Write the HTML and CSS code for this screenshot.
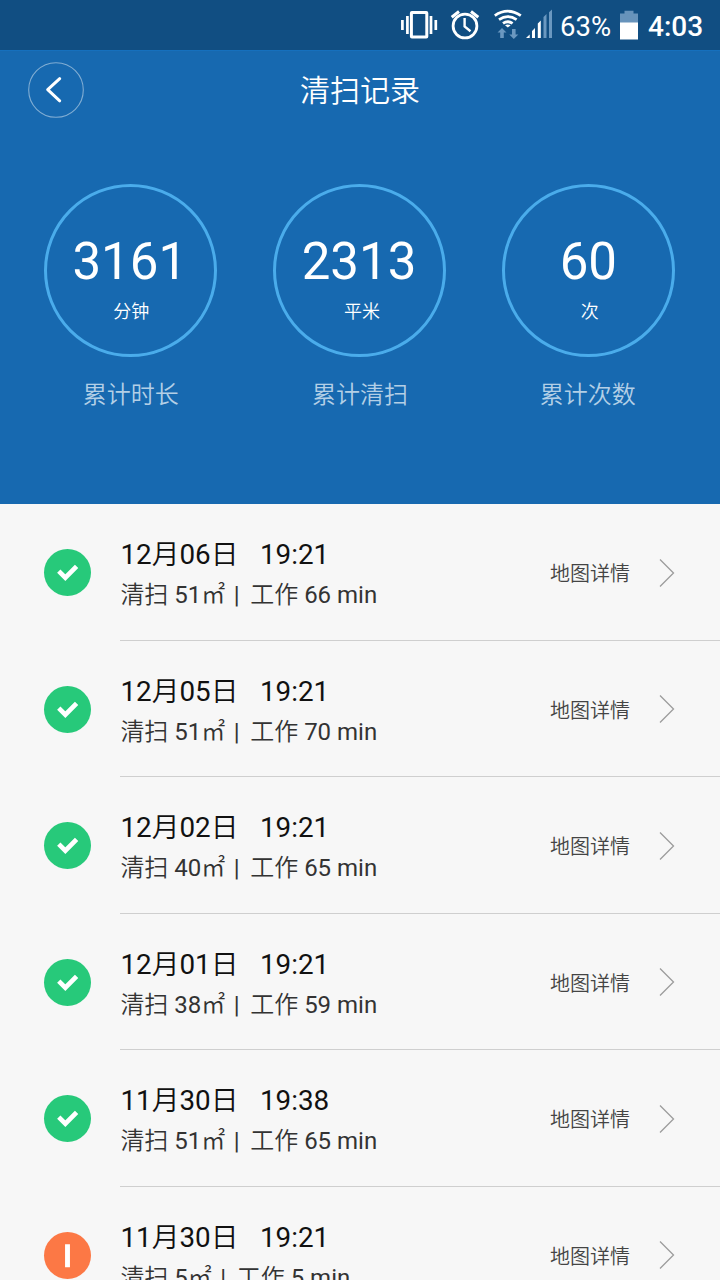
FILE: index.html
```html
<!DOCTYPE html>
<html lang="zh-CN">
<head>
<meta charset="utf-8">
<title>清扫记录</title>
<link rel="stylesheet" href="styles.css">
</head>
<body>
<svg class="defs" width="0" height="0">
  <symbol id="check" viewBox="0 0 48 48"><path d="M15.100 22.600 21.800 29.300 33.300 17.700" fill="none" stroke="#fff" stroke-width="4.800"/></symbol>
  <symbol id="bar" viewBox="0 0 48 48"><path d="M24 12.500V36" fill="none" stroke="#fff" stroke-width="5"/></symbol>
  <symbol id="chevron" viewBox="0 0 16 30"><path d="M1 1.5 14.5 15 1 28.5" fill="none" stroke="#9c9c9c" stroke-width="1.3"/></symbol>
</svg>
<div class="status">
  <svg class="status-icons" width="154" height="50" viewBox="400 0 154 50">
    <g fill="none" stroke="#fff" stroke-width="2.8">
      <rect x="411.400" y="12.600" width="15.400" height="24.500" rx="0.500" stroke-width="3"/>
      <path d="M407.400 16V34M431 16V34M402.400 20V30M435.800 20V30" stroke-width="2.700"/>
      <circle cx="465" cy="26" r="11.900" stroke-width="2.800"/>
      <path d="M464.600 18V26.500L470.500 31.200" stroke-width="2.400"/>
      <path d="M451.700 17.200 459 11.500M478.300 17.200 471 11.500" stroke-width="3"/>
      <path d="M494.800 15.600Q507.800 6.800 520.800 15.600M499 19.600Q507.800 13.600 516.600 19.600M503 23.400Q507.800 20 512.600 23.400" stroke-width="2.800"/>
    </g>
    <path d="M505 25.200Q507.800 23.800 510.600 25.200L507.800 27.600Z" fill="#fff"/>
    <g fill="#6b98c0">
      <path d="M502 28 506.500 32.500H503.800V38H500.200V32.500H497.500ZM513.800 39 509.300 34.500H512V29H515.600V34.500H518.300Z"/>
      <path d="M543.500 17 546.500 14V38H543.500ZM549 12.200 552 9.500V38H549Z"/>
    </g>
    <path d="M526 38 529.700 34.500V38ZM532 31 535 28V38H532ZM537.800 23.500 540.800 20.500V38H537.800Z" fill="#fff"/>
  </svg>
  <span class="percent">63%</span>
  <svg class="battery" width="20" height="30" viewBox="0 0 20 30"><path d="M5.500 0.800H14.500V3.500H19V13H1V3.500H5.500Z" fill="#6793bb"/><rect x="1" y="12.500" width="18" height="17" fill="#fff"/></svg>
  <span class="clock">4:03</span>
</div>
<header class="hero">
  <div class="titlebar">
    <svg class="back" width="56" height="56" viewBox="0 0 56 56"><circle cx="28" cy="28" r="27.300" fill="none" stroke="#80add3" stroke-width="1.100"/><path d="M31.700 16.700 19.700 27.700 31.700 38.800" fill="none" stroke="#fff" stroke-width="3" stroke-linecap="round" stroke-linejoin="round"/></svg>
    <h1>清扫记录</h1>
  </div>
  <div class="stats">
    <div class="stat"><div class="ring"><b>3161</b><span>分钟</span></div><p>累计时长</p></div>
    <div class="stat"><div class="ring"><b>2313</b><span class="area">平米</span></div><p>累计清扫</p></div>
    <div class="stat"><div class="ring"><b>60</b><span>次</span></div><p class="count">累计次数</p></div>
  </div>
</header>
<main class="list">
  <div class="row"><svg class="badge"><use href="#check"/></svg><div class="body"><div class="info"><div class="date"><span><b>12</b>月<b>06</b>日</span><b>19:21</b></div><div class="detail"><span>清扫<b> 51</b><em>㎡</em></span><i>|</i><span>工作<b> 66 min</b></span></div></div><span class="link">地图详情</span><svg class="chevron"><use href="#chevron"/></svg></div></div>
  <div class="row"><svg class="badge"><use href="#check"/></svg><div class="body"><div class="info"><div class="date"><span><b>12</b>月<b>05</b>日</span><b>19:21</b></div><div class="detail"><span>清扫<b> 51</b><em>㎡</em></span><i>|</i><span>工作<b> 70 min</b></span></div></div><span class="link">地图详情</span><svg class="chevron"><use href="#chevron"/></svg></div></div>
  <div class="row"><svg class="badge"><use href="#check"/></svg><div class="body"><div class="info"><div class="date"><span><b>12</b>月<b>02</b>日</span><b>19:21</b></div><div class="detail"><span>清扫<b> 40</b><em>㎡</em></span><i>|</i><span>工作<b> 65 min</b></span></div></div><span class="link">地图详情</span><svg class="chevron"><use href="#chevron"/></svg></div></div>
  <div class="row"><svg class="badge"><use href="#check"/></svg><div class="body"><div class="info"><div class="date"><span><b>12</b>月<b>01</b>日</span><b>19:21</b></div><div class="detail"><span>清扫<b> 38</b><em>㎡</em></span><i>|</i><span>工作<b> 59 min</b></span></div></div><span class="link">地图详情</span><svg class="chevron"><use href="#chevron"/></svg></div></div>
  <div class="row"><svg class="badge"><use href="#check"/></svg><div class="body"><div class="info"><div class="date"><span><b>11</b>月<b>30</b>日</span><b>19:38</b></div><div class="detail"><span>清扫<b> 51</b><em>㎡</em></span><i>|</i><span>工作<b> 65 min</b></span></div></div><span class="link">地图详情</span><svg class="chevron"><use href="#chevron"/></svg></div></div>
  <div class="row"><svg class="badge warn"><use href="#bar"/></svg><div class="body"><div class="info"><div class="date"><span><b>11</b>月<b>30</b>日</span><b>19:21</b></div><div class="detail"><span>清扫<b> 5</b><em>㎡</em></span><i>|</i><span>工作<b> 5 min</b></span></div></div><span class="link">地图详情</span><svg class="chevron"><use href="#chevron"/></svg></div></div>
</main>
</body>
</html>
```
FILE: styles.css
```css
* { box-sizing: border-box; }
body { margin: 0; width: 720px; height: 1280px; overflow: hidden; background: #f7f7f7; font-family: Roboto, "Noto Sans CJK SC DemiLight", "Noto Sans CJK SC", sans-serif; display: flex; flex-direction: column; }
.defs { position: absolute; }
.status { height: 50px; flex: none; background: #114e82; color: #fff; display: flex; align-items: center; justify-content: flex-end; padding-right: 16px; }
.status-icons { margin-right: 6px; }
.percent { font-size: 27.5px; line-height: 50px; padding-top: 3px; width: 51px; white-space: nowrap; }
.battery { margin: 0 9px 0 8px; }
.clock { font-size: 28px; font-weight: 500; line-height: 50px; padding-top: 3px; width: 56px; white-space: nowrap; }
.hero { height: 454px; flex: none; background: #1769b0; color: #fff; border-top: 1px solid #1670bd; }
.titlebar { display: grid; grid-template-columns: 56px 1fr 56px; padding: 11px 28px 0; height: 67px; align-items: start; }
.titlebar h1 { margin: 0; padding-top: 1px; font-size: 30px; line-height: 56px; font-weight: 350; text-align: center; }
.stats { display: grid; grid-template-columns: repeat(3, 229.3px); padding: 65.6px 0 0 15.6px; }
.stat { display: flex; flex-direction: column; align-items: center; }
.ring { width: 173px; height: 173px; border: 3px solid #4aaceb; border-radius: 50%; display: flex; flex-direction: column; align-items: center; padding-top: 45.4px; }
.ring b { font-size: 51px; line-height: 60px; font-weight: 400; margin-right: 1px; }
.ring span { font-size: 18px; line-height: 26px; margin: 7px 0 0 2px; font-weight: 350; }
.ring .area { margin-left: 5px; }
.stat p { margin: 20px 0 0 1px; font-size: 24px; line-height: 36px; font-weight: 350; color: #b3cfe6; }
.stat .count { margin-left: -2px; }
.list { flex: none; }
.row { height: 136.5px; display: flex; align-items: stretch; padding-left: 43.6px; }
.badge { flex: none; width: 47px; height: 47px; margin: 45.4px 29.4px 0 0; background: #27c97a; border-radius: 50%; }
.badge.warn { background: #fc7845; }
.body { flex: 1; display: flex; align-items: center; border-bottom: 1px solid #cfcfcf; padding: 2px 45px 0 0; }
.info { flex: 1; padding-top: 4px; }
.date, .detail { display: flex; white-space: pre; font-weight: 350; }
.date b, .detail b { font-weight: 400; }
.date { font-size: 27.8px; line-height: 42px; color: #111; gap: 21.5px; padding-left: .4px; }
.detail { font-size: 24px; line-height: 39px; color: #333; padding-left: .4px; }
.detail em { font-style: normal; font-weight: 300; }
.detail i { font-style: normal; font-weight: 400; margin: 0 10.5px 0 8.5px; }
.link { font-size: 20px; font-weight: 350; color: #444; margin-right: 29px; }
.chevron { width: 16px; height: 30px; }
```
